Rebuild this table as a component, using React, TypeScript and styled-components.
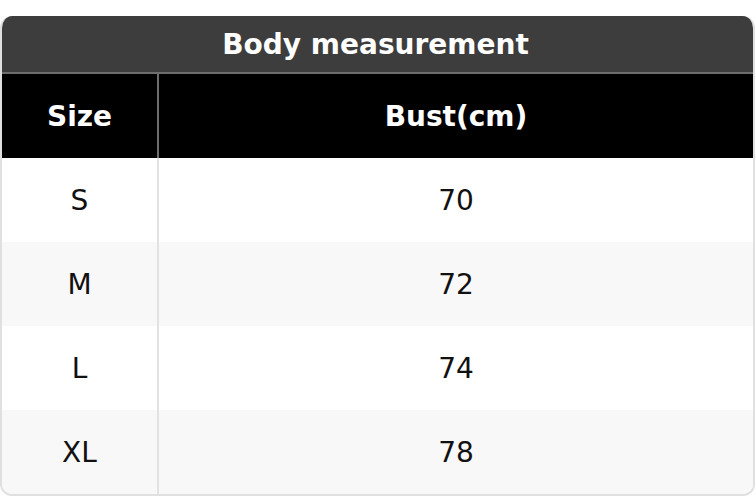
import React from "react";
import styled, { createGlobalStyle } from "styled-components";

const Global = createGlobalStyle`
  html, body { margin: 0; padding: 0; background: #ffffff; }
  body { font-family: "DejaVu Sans", Verdana, sans-serif; }
`;

const Wrapper = styled.div`
  padding-top: 16px;
  width: 756px;
  box-sizing: border-box;
`;

const Card = styled.div`
  width: 755px;
  border: 2px solid #e0e0e0;
  border-top: none;
  border-radius: 12px;
  overflow: hidden;
  box-sizing: border-box;
`;

const Title = styled.div`
  height: 58px;
  background: #3d3d3d;
  color: #ffffff;
  font-weight: bold;
  font-size: 28px;
  display: flex;
  align-items: center;
  justify-content: center;
  padding-right: 4px;
  border-bottom: 2px solid #6e6e6e;
  box-sizing: border-box;
  margin: 0 -2px;
`;

const Table = styled.table`
  width: 100%;
  border-collapse: collapse;
  table-layout: fixed;
`;

const HeadCell = styled.th<{ $first?: boolean }>`
  height: 84px;
  background: #000000;
  color: #ffffff;
  font-weight: bold;
  font-size: 28px;
  text-align: center;
  padding: 0;
  width: ${(p) => (p.$first ? "155px" : "auto")};
  border-right: ${(p) => (p.$first ? "2px solid #6e6e6e" : "none")};
`;

const Row = styled.tr<{ $alt: boolean }>`
  background: ${(p) => (p.$alt ? "#f8f8f8" : "#ffffff")};
`;

const Cell = styled.td<{ $first?: boolean }>`
  height: 84px;
  padding: 0;
  text-align: center;
  font-size: 28px;
  color: #111111;
  border-right: ${(p) => (p.$first ? "2px solid #e2e2e2" : "none")};
`;

const rows = [
  ["S", "70"],
  ["M", "72"],
  ["L", "74"],
  ["XL", "78"],
];

export default function App() {
  return (
    <>
      <Global />
      <Wrapper>
        <Card>
          <Title>Body measurement</Title>
          <Table>
            <thead>
              <tr>
                <HeadCell $first>Size</HeadCell>
                <HeadCell>Bust(cm)</HeadCell>
              </tr>
            </thead>
            <tbody>
              {rows.map(([s, b], i) => (
                <Row key={s} $alt={i % 2 === 1}>
                  <Cell $first>{s}</Cell>
                  <Cell>{b}</Cell>
                </Row>
              ))}
            </tbody>
          </Table>
        </Card>
      </Wrapper>
    </>
  );
}
